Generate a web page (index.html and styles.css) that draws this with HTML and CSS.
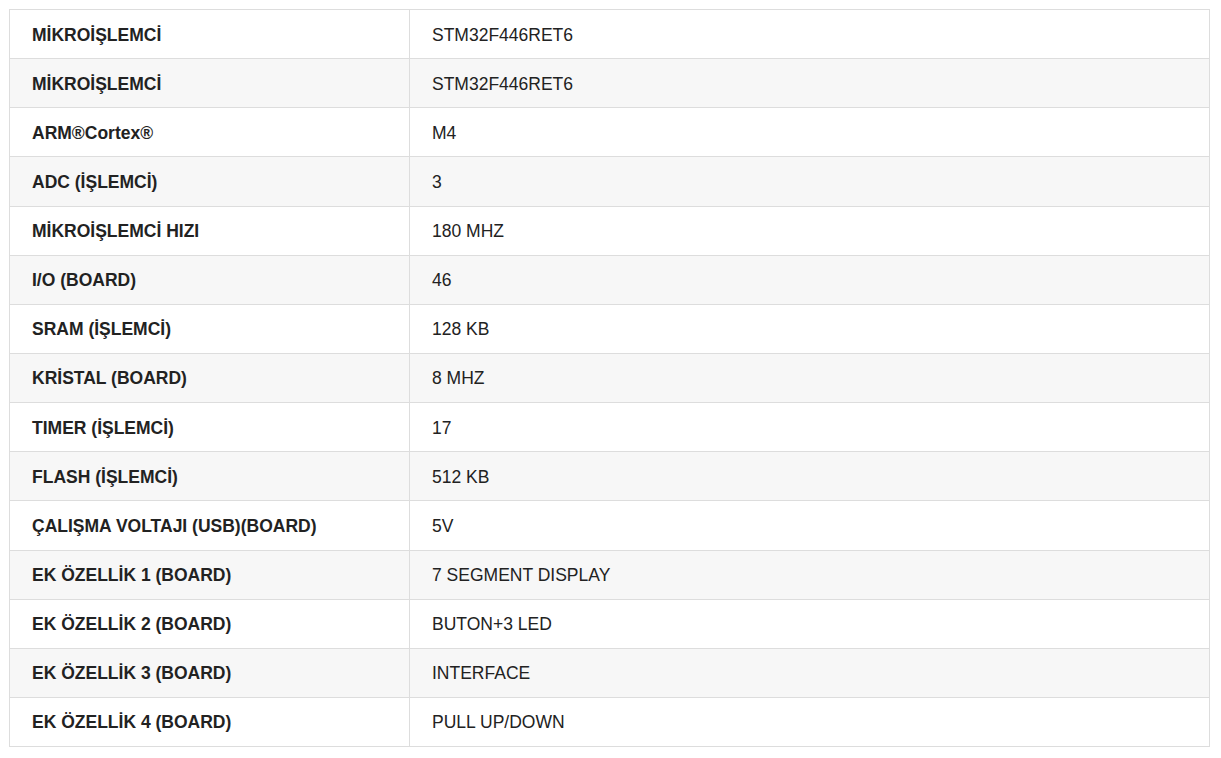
FILE: index.html
```html
<!DOCTYPE html>
<html lang="tr">
<head>
<meta charset="utf-8">
<link rel="stylesheet" href="styles.css">
</head>
<body>
<div class="wrap">
<table class="specs">
<tbody>
<tr><th>MİKROİŞLEMCİ</th><td>STM32F446RET6</td></tr>
<tr><th>MİKROİŞLEMCİ</th><td>STM32F446RET6</td></tr>
<tr><th>ARM®Cortex®</th><td>M4</td></tr>
<tr><th>ADC (İŞLEMCİ)</th><td>3</td></tr>
<tr><th>MİKROİŞLEMCİ HIZI</th><td>180 MHZ</td></tr>
<tr><th>I/O (BOARD)</th><td>46</td></tr>
<tr><th>SRAM (İŞLEMCİ)</th><td>128 KB</td></tr>
<tr><th>KRİSTAL (BOARD)</th><td>8 MHZ</td></tr>
<tr><th>TIMER (İŞLEMCİ)</th><td>17</td></tr>
<tr><th>FLASH (İŞLEMCİ)</th><td>512 KB</td></tr>
<tr><th>ÇALIŞMA VOLTAJI (USB)(BOARD)</th><td>5V</td></tr>
<tr><th>EK ÖZELLİK 1 (BOARD)</th><td>7 SEGMENT DISPLAY</td></tr>
<tr><th>EK ÖZELLİK 2 (BOARD)</th><td>BUTON+3 LED</td></tr>
<tr><th>EK ÖZELLİK 3 (BOARD)</th><td>INTERFACE</td></tr>
<tr><th>EK ÖZELLİK 4 (BOARD)</th><td>PULL UP/DOWN</td></tr>
</tbody>
</table>
</div>
</body>
</html>
```
FILE: styles.css
```css
html, body {
  margin: 0;
  padding: 0;
  background: #fff;
}
.wrap {
  padding: 9px 0 0 9px;
}
.specs {
  width: 1201px;
  border-collapse: collapse;
  font-family: "Liberation Sans", Arial, sans-serif;
  font-size: 17.5px;
  color: #222;
}
.specs th,
.specs td {
  border: 1px solid #dddddd;
  padding: 12.5px 22px 11.5px;
  line-height: 24.14px;
  text-align: left;
  vertical-align: middle;
}
.specs th {
  width: 355px;
  font-weight: bold;
}
.specs td {
  font-weight: normal;
}
.specs tr:nth-child(even) {
  background: #f7f7f7;
}
```
